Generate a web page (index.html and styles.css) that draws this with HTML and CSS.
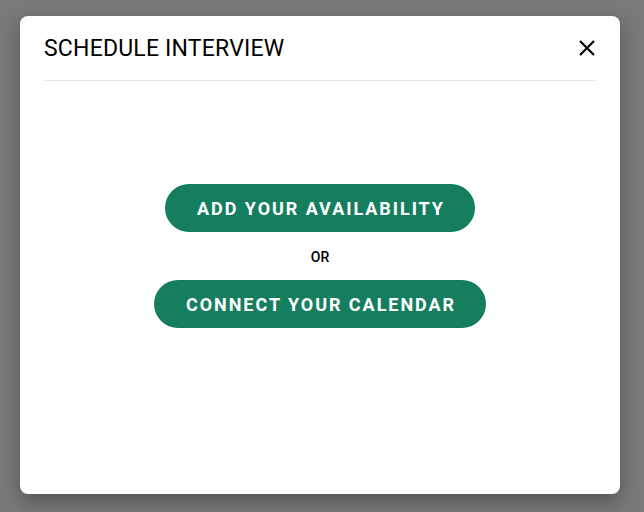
FILE: index.html
```html
<!DOCTYPE html>
<html>
<head>
<meta charset="utf-8">
<link rel="stylesheet" href="styles.css">
</head>
<body>
<div class="modal">
  <div class="modal-header">
    <h1 class="modal-title">SCHEDULE INTERVIEW</h1>
    <button class="close" aria-label="Close">
      <svg width="18" height="18" viewBox="0 0 18 18"><path d="M2 2L16 16M16 2L2 16" stroke="#000" stroke-width="2.2" fill="none"/></svg>
    </button>
  </div>
  <div class="modal-body">
    <button class="pill">ADD YOUR AVAILABILITY</button>
    <div class="or">OR</div>
    <button class="pill">CONNECT YOUR CALENDAR</button>
  </div>
</div>
</body>
</html>
```
FILE: styles.css
```css
html, body { margin: 0; height: 100%; }
body {
  background: #797979;
  font-family: Roboto, "Liberation Sans", sans-serif;
  padding: 16px 24px 18px 20px;
  box-sizing: border-box;
}
.modal {
  width: 600px;
  height: 478px;
  background: #fff;
  border-radius: 8px;
  box-shadow: 0 8px 20px rgba(0,0,0,0.3);
  display: flex;
  flex-direction: column;
}
.modal-header {
  margin: 0 24px;
  height: 64px;
  border-bottom: 1px solid #e6e6e6;
  display: flex;
  align-items: center;
  justify-content: space-between;
}
.modal-title {
  margin: 0;
  font-size: 23px;
  font-weight: 400;
  letter-spacing: 0.2px;
  color: #000;
}
.close {
  border: 0;
  background: none;
  padding: 0;
  width: 18px;
  height: 18px;
  display: flex;
}
.modal-body {
  display: flex;
  flex-direction: column;
  align-items: center;
  padding-top: 103px;
}
.pill {
  background: #157e5f;
  color: #fff;
  border: 0;
  border-radius: 24px;
  height: 48px;
  padding: 0 30px 0 32px;
  font-family: Roboto, "Liberation Sans", sans-serif;
  font-weight: 700;
  font-size: 18px;
  letter-spacing: 1.95px;
}
.or {
  font-size: 14px;
  font-weight: 500;
  color: #000;
  margin: 16px 0 13px;
  line-height: 19px;
}
```
